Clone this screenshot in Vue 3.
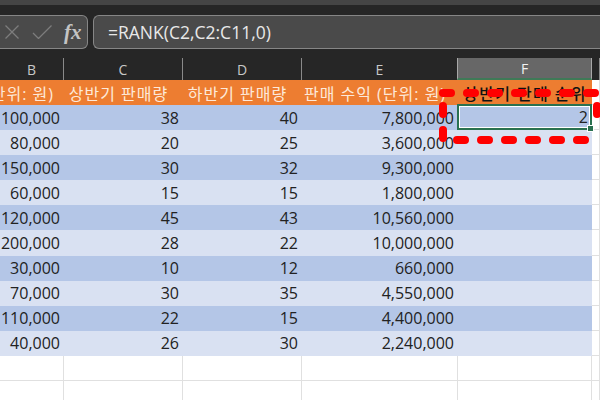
<script setup>
const columns = ['B', 'C', 'D', 'E', 'F', '']
const headers = ['단위: 원)', '상반기 판매량', '하반기 판매량', '판매 수익 (단위: 원)', '상반기 판매 순위']
const rows = [
  ['100,000', 38, 40, '7,800,000'],
  ['80,000', 20, 25, '3,600,000'],
  ['150,000', 30, 32, '9,300,000'],
  ['60,000', 15, 15, '1,800,000'],
  ['120,000', 45, 43, '10,560,000'],
  ['200,000', 28, 22, '10,000,000'],
  ['30,000', 10, 12, '660,000'],
  ['70,000', 30, 35, '4,550,000'],
  ['110,000', 22, 15, '4,400,000'],
  ['40,000', 26, 30, '2,240,000']
]
</script>

<template>
  <div class="screen">
    <div class="top-strip"></div>
    <div class="formula-bar">
      <div class="fx-box">
        <svg class="bar-icon" width="14" height="14" viewBox="0 0 14 14"><path d="M0.5 0.5 L13.5 13.5 M13.5 0.5 L0.5 13.5" /></svg>
        <svg class="bar-icon" width="20" height="14" viewBox="0 0 20 14"><path d="M1 8 L6.5 13.5 L19.5 0.5" /></svg>
        <span class="fx">fx</span>
      </div>
      <div class="formula">=RANK(C2,C2:C11,0)</div>
    </div>
    <div class="sheet">
      <div v-for="(col, i) in columns" :key="i" class="col-head" :class="{ selected: col === 'F' }">{{ col }}</div>
      <div v-for="(h, i) in headers" :key="h" class="title" :class="{ dark: i === 4, clip: i === 0 }"><span>{{ h }}</span></div>
      <div class="blank"></div>
      <template v-for="(row, r) in rows" :key="r">
        <div v-for="(val, c) in row" :key="c" class="cell" :class="r % 2 ? 'even' : 'odd'">{{ val }}</div>
        <div class="cell" :class="[r % 2 ? 'even' : 'odd', { active: r === 0 }]">{{ r === 0 ? 2 : '' }}</div>
        <div class="blank"></div>
      </template>
      <template v-for="r in 2" :key="'e' + r">
        <div v-for="c in 6" :key="c" class="blank"></div>
      </template>
    </div>
    <!-- 빨간 점선 표시 -->
    <svg class="marker" width="600" height="400" viewBox="0 0 600 400">
      <path d="M443 93 H600 M457 140 H600 M443 106 V140 M597 106 V130" stroke-dasharray="8 16" />
    </svg>
  </div>
</template>

<style>
body {
  margin: 0;
}
</style>

<style scoped>
.screen {
  position: relative;
  width: 600px;
  height: 400px;
  overflow: hidden;
  background: #fff;
  font-family: "Open Sans", "Noto Sans CJK KR", sans-serif;
}

.top-strip {
  height: 5px;
  background: #454545;
}

.formula-bar {
  display: flex;
  gap: 5px;
  height: 53px;
  padding: 10px 0 9px;
  box-sizing: border-box;
  background: #262626;
}

.fx-box {
  display: flex;
  align-items: center;
  width: 88px;
  padding-left: 5px;
  box-sizing: border-box;
  border: 1px solid #868686;
  border-left: none;
  border-radius: 0 6px 6px 0;
  background: #4a4a4a;
}

.bar-icon {
  fill: none;
  stroke: #7d7d7d;
  stroke-width: 1.3;
  flex-shrink: 0;
  margin-right: 13px;
}

.fx {
  font-family: "Liberation Serif", serif;
  font-style: italic;
  font-weight: bold;
  font-size: 21px;
  color: #c4c4c4;
  margin-left: -1px;
}

.formula {
  flex: 1;
  display: flex;
  align-items: center;
  padding-left: 14px;
  border: 1px solid #868686;
  border-right: none;
  border-radius: 6px 0 0 6px;
  background: #4a4a4a;
  color: #e8e8e8;
  font-size: 17.5px;
}

.sheet {
  display: grid;
  grid-template-columns: 64px 119px 119px 156px 134px 8px;
  grid-template-rows: 22px 25px;
  grid-auto-rows: 25.1px;
}

.col-head {
  display: flex;
  align-items: center;
  justify-content: center;
  background: #262626;
  border-right: 1px solid #8a8a8a;
  box-sizing: border-box;
  color: #c8c8c8;
  font-size: 14px;
}

.col-head:last-child {
  border-right: none;
}

.col-head.selected {
  background: #676767;
  color: #f2f2f2;
  border-left: 1px solid #a8a8a8;
  border-right: 1px solid #a8a8a8;
  border-bottom: 2px solid #3f7a57;
  margin-left: -1px;
}

.title {
  display: flex;
  align-items: center;
  justify-content: center;
  overflow: hidden;
  white-space: nowrap;
  padding-right: 10px;
  background: #ed7d31;
  color: #fde9d9;
  font-size: 16px;
  letter-spacing: 1px;
}

.title.clip {
  justify-content: flex-end;
}

.title.dark {
  padding-right: 0;
  color: #111;
  font-weight: 500;
  letter-spacing: 1.4px;
}

.cell {
  display: flex;
  align-items: center;
  justify-content: flex-end;
  padding-right: 4px;
  box-sizing: border-box;
  font-size: 16px;
  color: #222;
}

.odd {
  background: #b4c6e7;
}

.even {
  background: #d9e1f2;
}

.active {
  position: relative;
  margin: -1px 0 0 -1px;
  border: 2px solid #2a7150;
  box-shadow: inset 0 0 0 1px #fff;
  padding-right: 2px;
}

.active::after {
  content: "";
  position: absolute;
  right: -4px;
  bottom: -4px;
  width: 5px;
  height: 5px;
  background: #2a7150;
  border: 1px solid #fff;
}

.blank {
  box-sizing: border-box;
  border-right: 1px solid #e0e0e0;
  border-bottom: 1px solid #e0e0e0;
}

.marker {
  position: absolute;
  left: 0;
  top: 0;
  pointer-events: none;
}

.marker path {
  fill: none;
  stroke: #ff0000;
  stroke-width: 8;
  stroke-linecap: round;
}
</style>
